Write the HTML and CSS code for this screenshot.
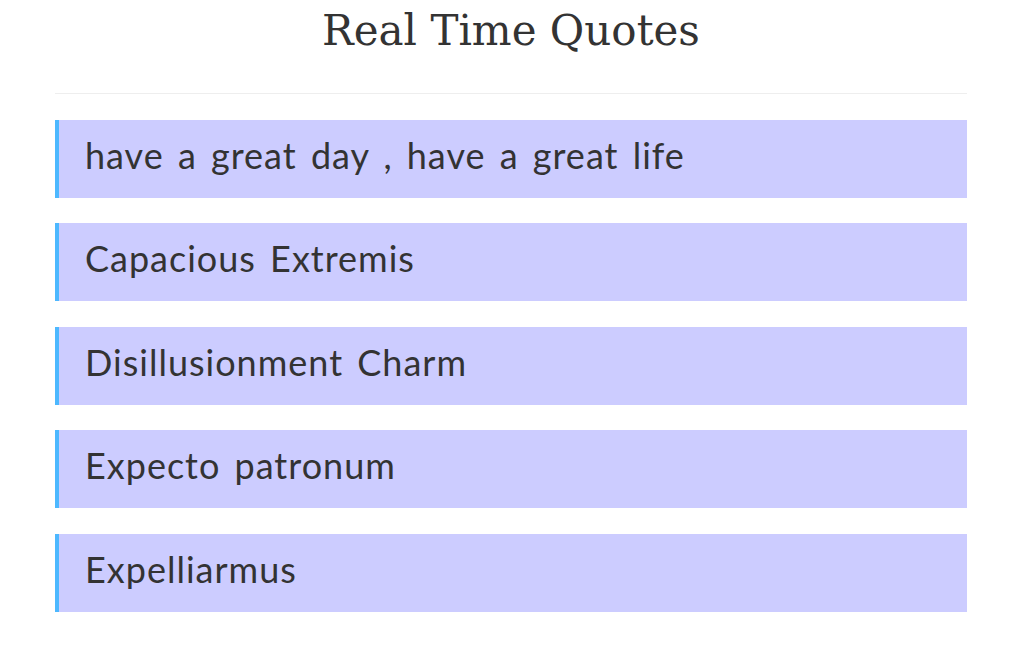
FILE: index.html
```html
<!DOCTYPE html>
<html lang="en">
<head>
<meta charset="utf-8">
<title>Real Time Quotes</title>
<link rel="stylesheet" href="styles.css">
</head>
<body>
<div class="page">
  <h1 class="title">Real Time Quotes</h1>
  <hr class="rule">
  <ul class="quotes">
    <li class="quote">have a great day , have a great life</li>
    <li class="quote">Capacious Extremis</li>
    <li class="quote">Disillusionment Charm</li>
    <li class="quote">Expecto patronum</li>
    <li class="quote">Expelliarmus</li>
  </ul>
</div>
</body>
</html>
```
FILE: styles.css
```css
html, body {
  margin: 0;
  padding: 0;
  background: #ffffff;
}
.page {
  width: 912px;
  margin-left: 55px;
  color: #333333;
}
.title {
  margin: 0;
  padding-top: 6px;
  height: 93px;
  box-sizing: border-box;
  text-align: center;
  font-family: "DejaVu Serif", serif;
  font-weight: normal;
  font-size: 42px;
  line-height: 50px;
}
.rule {
  margin: 0;
  border: 0;
  border-top: 1px solid #eeeeee;
}
.quotes {
  list-style: none;
  margin: 26px 0 0;
  padding: 0;
  display: flex;
  flex-direction: column;
  gap: 25.9px;
}
.quote {
  height: 77.6px;
  box-sizing: border-box;
  display: flex;
  align-items: center;
  background: #ccccff;
  border-left: 4px solid #4db8ff;
  padding: 0 0 8px 26px;
  font-family: "Lato", sans-serif;
  font-size: 36px;
  letter-spacing: 1px;
  word-spacing: 4px;
}
```
